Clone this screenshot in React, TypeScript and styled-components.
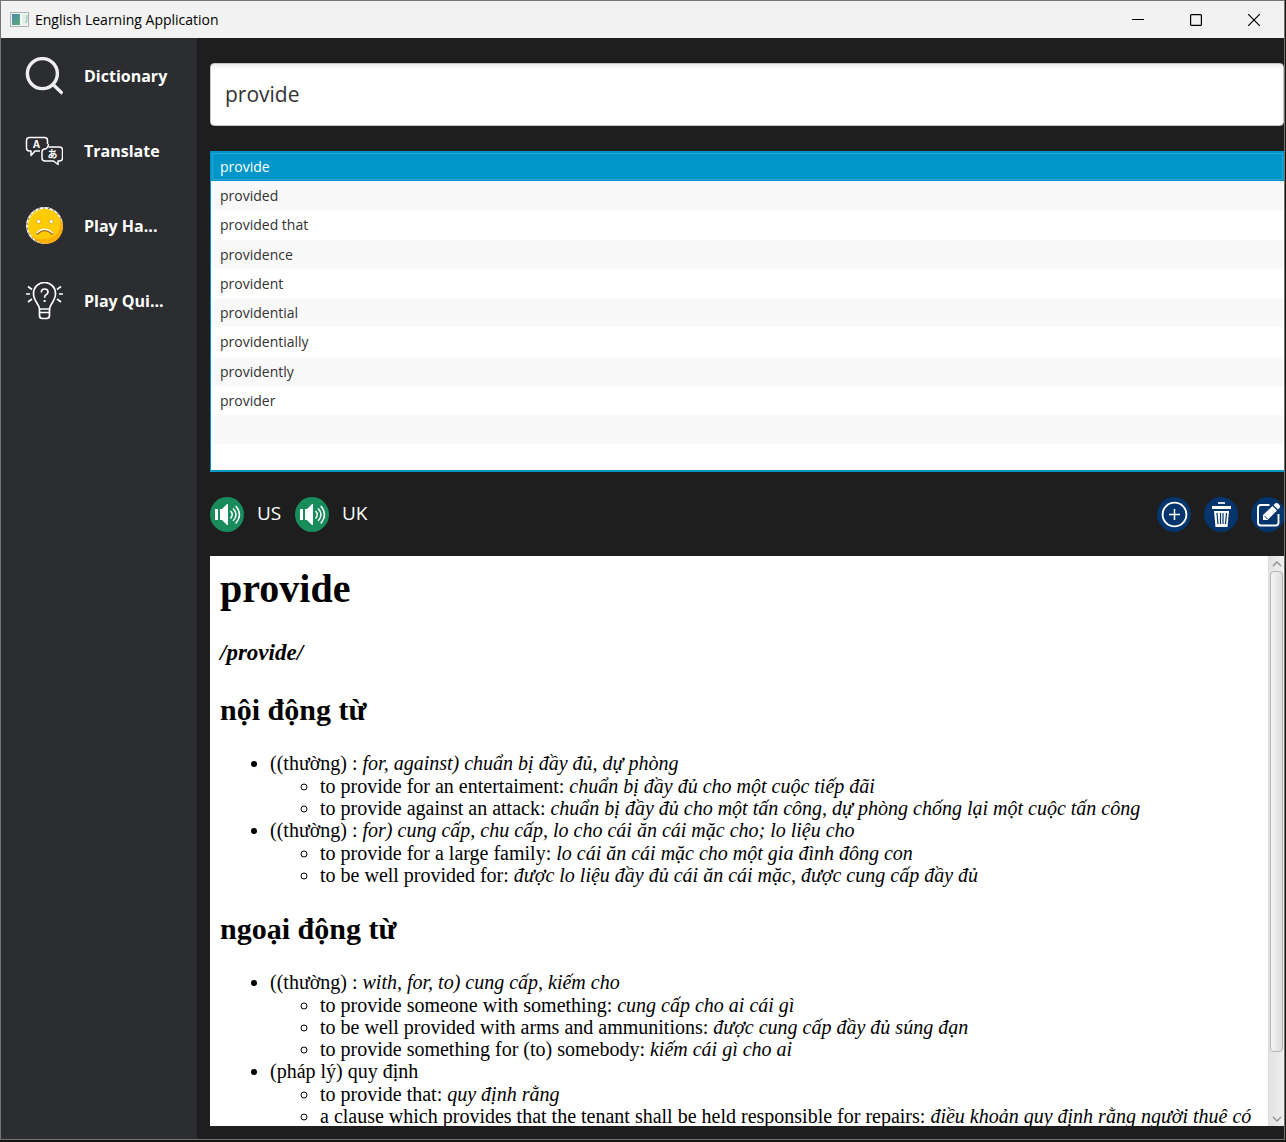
import React, { useState } from "react";
import styled, { createGlobalStyle } from "styled-components";

const ui = `"Open Sans", "Noto Sans", sans-serif`;

const GlobalStyle = createGlobalStyle`
  * { box-sizing: border-box; }
  body { margin: 0; background: #14150f; }
  button { border: 0; padding: 0; background: none; color: inherit; font: inherit; cursor: pointer; }
`;

const Desktop = styled.div`
  height: 100vh;
  padding: 0 1px 2px 0;
  font-family: ${ui};
`;

const AppWindow = styled.div`
  display: flex;
  flex-direction: column;
  height: 100%;
  border: 1px solid #747474;
  background: #1e1e1e;
  overflow: hidden;
`;

const TitleBar = styled.header`
  display: flex;
  flex: none;
  align-items: center;
  height: 37px;
  padding: 0 1px 0 9px;
  background: #f2f2f2;
`;

const WindowTitle = styled.h1`
  flex: 1;
  margin: 0 0 0 5px;
  font-size: 14px;
  font-weight: 400;
  line-height: 20px;
  color: #000;
`;

const WindowButton = styled.button`
  display: flex;
  align-items: center;
  justify-content: center;
  width: 58px;
  height: 37px;
`;

const Body = styled.div`
  display: flex;
  flex: 1;
  min-height: 0;
`;

const Sidebar = styled.nav`
  flex: none;
  width: 196px;
  background: #2b2d30;
`;

const NavButton = styled.button`
  display: flex;
  align-items: center;
  gap: 21px;
  width: 100%;
  height: 75px;
  padding-left: 24px;
  color: #fff;
  font-size: 16px;
  font-weight: 700;
  white-space: nowrap;
`;

const Main = styled.main`
  display: flex;
  flex: 1;
  flex-direction: column;
  gap: 25px;
  min-width: 0;
  padding: 25px 0 13px 13px;
  overflow: hidden;
`;

const SearchInput = styled.input`
  flex: none;
  width: 100%;
  height: 63px;
  padding: 0 14px 2px;
  border: 1px solid #c4c4c4;
  border-radius: 4px;
  outline: none;
  background: linear-gradient(#ededed, #fff 6px);
  color: #323232;
  font-family: ${ui};
  font-size: 21px;
`;

const WordList = styled.ul`
  display: grid;
  flex: none;
  grid-template-rows: repeat(3, 29px 29px 30px 29px);
  height: 321px;
  margin: 0;
  padding: 0;
  border: 2px solid #0096c9;
  border-width: 1px 0 2px 1px;
  background: #fff;
  list-style: none;
  overflow: hidden;
`;

const WordRow = styled.li`
  display: flex;
  min-height: 0;
  &:nth-child(even) { background: #f9f9f9; }
`;

const WordButton = styled.button<{ $selected: boolean }>`
  flex: 1;
  padding: 0 8px;
  border: 1px solid ${(p) => (p.$selected ? "#33a9d4" : "transparent")};
  outline: ${(p) => (p.$selected ? "1px solid #0096c9" : "none")};
  outline-offset: -1px;
  box-shadow: ${(p) => (p.$selected ? "inset 0 0 0 1px #2aa5d2" : "none")};
  background: ${(p) => (p.$selected ? "#0096c9" : "transparent")};
  color: ${(p) => (p.$selected ? "#fff" : "#323232")};
  font-size: 14px;
  line-height: 20px;
  text-align: left;
`;

const Tools = styled.div`
  display: flex;
  flex: none;
  align-items: center;
  gap: 13px;
  height: 35px;
  margin-right: -1px;
  color: #fff;
  font-size: 19px;
`;

const RoundButton = styled.button<{ $color: string }>`
  display: flex;
  flex: none;
  align-items: center;
  justify-content: center;
  width: 34px;
  height: 35px;
  border-radius: 50%;
  background: ${(p) => p.$color};
`;

const Accent = styled.span`
  width: 25px;
  padding-bottom: 4px;
  line-height: 24px;
`;

const Spacer = styled.div`
  flex: 1;
`;

const Viewer = styled.section`
  display: flex;
  flex: 1;
  min-height: 0;
  margin-top: -1px;
  background: #fff;
`;

const Article = styled.article`
  flex: 1;
  min-width: 0;
  padding: 10px 10px 0;
  color: #000;
  font-family: "Liberation Serif", "Times New Roman", serif;
  font-size: 20px;
  white-space: nowrap;
  overflow: hidden;
`;

const Headword = styled.h2`
  margin: 0 0 29px;
  font-size: 40px;
  line-height: 45px;
`;

const Pronunciation = styled.h3`
  margin: 0 0 27px;
  font-size: 23px;
  font-style: italic;
  line-height: 26px;
`;

const PartOfSpeech = styled.h3`
  margin: 0 0 25px;
  font-size: 30px;
  line-height: 34px;
`;

const Senses = styled.ul`
  margin: 0 0 26px;
  padding-left: 50px;
  line-height: 23px;
  list-style: disc;
`;

const Examples = styled.ul`
  margin: 0;
  padding-left: 50px;
  line-height: 22px;
  list-style: circle;
`;

const Scrollbar = styled.div`
  display: flex;
  flex: none;
  flex-direction: column;
  align-items: center;
  width: 16px;
  border-left: 1px solid #dcdcdc;
  background: linear-gradient(90deg, #e2e2e2, #efefef);
`;

const ScrollButton = styled.button`
  display: flex;
  align-items: center;
  justify-content: center;
  width: 15px;
  height: 15px;
`;

const Track = styled.div`
  display: flex;
  flex: 1;
  flex-direction: column;
  width: 13px;
`;

const Thumb = styled.div`
  flex: 0 0 89%;
  border: 1px solid #b4b4b4;
  border-radius: 4px;
  background: linear-gradient(90deg, #f6f6f6, #dcdcdc);
`;

const AppLogo = () => (
  <svg width="20" height="16" viewBox="0 0 20 16" aria-hidden="true">
    <defs>
      <linearGradient id="logo" x1="0" y1="0" x2="1" y2="1">
        <stop offset="0" stopColor="#4a86b4" />
        <stop offset="1" stopColor="#5cae6c" />
      </linearGradient>
    </defs>
    <rect x="0.5" y="0.5" width="18" height="14" fill="#f4f6f8" stroke="#a9b0b6" />
    <rect x="2" y="2" width="8" height="11" fill="url(#logo)" />
    <path d="M12 2h5v6l-1 5h-4z" fill="#e2efe9" />
    <path d="M17 3v5l-1 3" fill="none" stroke="#86bd9b" />
  </svg>
);

const SearchIcon = () => (
  <svg width="38" height="38" viewBox="0 0 38 38" fill="none" stroke="#efefef" strokeWidth="3.4" aria-hidden="true">
    <circle cx="17.4" cy="16.6" r="15" />
    <path d="M27.5 27L37.500 36.500" />
  </svg>
);

const TranslateIcon = () => (
  <svg width="38" height="38" viewBox="0 0 38 38" fill="none" stroke="#fff" strokeWidth="1.5" strokeLinejoin="round" aria-hidden="true">
    <path d="M22.500 12V8.500a3 3 0 0 0-3-3H4.500a3 3 0 0 0-3 3V16a3 3 0 0 0 3 3h1.500v4.500l4-4.500h5" />
    <path d="M23.500 15h11a3 3 0 0 1 3 3v8a3 3 0 0 1-3 3H33v3.500L28.500 29H20a3 3 0 0 1-3-3v-6c0-2 1-3 3-3 2 0 3-2 3.500-5" />
    <text x="11.500" y="16" fill="#fff" stroke="none" fontFamily="Open Sans, sans-serif" fontSize="10" fontWeight="700" textAnchor="middle">A</text>
    <text x="27.500" y="26" fill="#fff" stroke="none" fontFamily="Noto Sans CJK JP, sans-serif" fontSize="10" fontWeight="700" textAnchor="middle">あ</text>
  </svg>
);

const SadIcon = () => (
  <svg width="38" height="38" viewBox="0 0 38 38" aria-hidden="true">
    <circle cx="19.500" cy="18.500" r="18.400" fill="#fff" />
    <circle cx="19.500" cy="18.500" r="17.400" fill="none" stroke="#2b2d30" strokeWidth="0.800" strokeDasharray="2 3" />
    <circle cx="19.500" cy="18.500" r="16.800" fill="#ffcb05" />
    <path d="M4 23.500A16 16 0 0 1 22 2.700 17 17 0 0 0 4 23.500Z" fill="#ffe34d" />
    <path d="M7 29.500a16.500 16.500 0 0 0 28-19q2 18-12 21-9 2-16-2Z" fill="#fbae08" />
    <g fill="#fff" stroke="#c58d10" strokeWidth="0.600">
      <circle cx="13.500" cy="14.500" r="2" />
      <circle cx="26.200" cy="14.500" r="2" />
    </g>
    <path d="M11.500 27.200q8-8.500 16.500 0" fill="none" stroke="#9c6e12" strokeWidth="2.600" />
    <path d="M11.500 26.300q8-8 16.500 0" fill="none" stroke="#fff" strokeWidth="1.500" />
  </svg>
);

const QuizIcon = () => (
  <svg width="38" height="38" viewBox="0 0 38 38" fill="none" stroke="#fff" strokeWidth="1.700" aria-hidden="true">
    <path d="M14.500 27c0-5-6-7.500-6-15.500a11 11 0 0 1 22 0c0 8-6 10.500-6 15.500Z" />
    <path d="M14.500 27v6.500q0 3 3 3h4q3 0 3-3V27M14.500 30.500h10" />
    <path d="M1 12h4M34 12h4M3 4.500l4 3M36 4.500l-4 3M3 20L7 17M36 20L32 17" />
    <path d="M16.300 10.500q0-3.500 3.400-3.500 3.300 0 3.300 3 0 1.800-2 2.800-1.400.7-1.400 3" />
    <path d="M18.600 19h2" strokeWidth="2" />
  </svg>
);

const SpeakerIcon = () => (
  <svg width="34" height="35" viewBox="0 0 34 35" aria-hidden="true">
    <path d="M5 12h3v11H5zM10 12h2l5-5h1v21h-1l-5-5h-2z" fill="#fff" />
    <path d="M20.500 14q3.500 3.500 0 7.500M23 11.500q6 6 0 12.500M25.700 9q7.500 8.500 0 17.500" fill="none" stroke="#fff" strokeWidth="1.500" />
  </svg>
);

const AddIcon = () => (
  <svg width="34" height="35" viewBox="0 0 34 35" fill="none" stroke="#fff" aria-hidden="true">
    <circle cx="17.500" cy="17.500" r="11.900" strokeWidth="1.900" />
    <path d="M17.500 12v11M12 17.500h11" strokeWidth="1.500" />
  </svg>
);

const TrashIcon = () => (
  <svg width="34" height="35" viewBox="0 0 34 35" aria-hidden="true">
    <path d="M14 5h7v2h-7z" fill="#d4dcea" />
    <path d="M8 9h19v3H8zM10 14h15l-1.500 16h-12z" fill="#fff" />
    <path d="M13 16l1 11M16.500 16v11M19 16v11M22.500 16l-1 11" stroke="#04356c" strokeWidth="1.200" />
  </svg>
);

const EditIcon = () => (
  <svg width="34" height="35" viewBox="0 0 34 35" aria-hidden="true">
    <path d="M18.500 8H10q-3 0-3 3v14.500q0 3 3 3h14.500q3 0 3-3V17" fill="none" stroke="#fff" strokeWidth="1.900" />
    <path d="M12 23v-5L21.500 9l4.500 4.500-9.500 9.500zM22.500 8l1.500-1.500q1.500-1 3 0l1.500 1.500q1 1.500 0 3L27 12.500z" fill="#fff" />
    <path d="M13.500 19l3 3" stroke="#04356c" />
  </svg>
);

const Chevron = ({ up }: { up?: boolean }) => (
  <svg width="10" height="6" viewBox="0 0 10 6" fill="none" stroke="#8f8f8f" strokeWidth="1.300" aria-hidden="true">
    <path d={up ? "M1 5l4-4 4 4" : "M1 1l4 4 4-4"} />
  </svg>
);

const nav = [
  { label: "Dictionary", Icon: SearchIcon },
  { label: "Translate", Icon: TranslateIcon },
  { label: "Play Ha...", Icon: SadIcon },
  { label: "Play Qui...", Icon: QuizIcon },
];

const words = [
  "provide", "provided", "provided that", "providence", "provident",
  "providential", "providentially", "providently", "provider",
];

type Phrase = { text: string; meaning?: string };
type Sense = Phrase & { examples: Phrase[] };

const entry: { part: string; senses: Sense[] }[] = [
  {
    part: "nội động từ",
    senses: [
      {
        text: "((thường) :", meaning: "for, against) chuẩn bị đầy đủ, dự phòng",
        examples: [
          { text: "to provide for an entertaiment:", meaning: "chuẩn bị đầy đủ cho một cuộc tiếp đãi" },
          { text: "to provide against an attack:", meaning: "chuẩn bị đầy đủ cho một tấn công, dự phòng chống lại một cuộc tấn công" },
        ],
      },
      {
        text: "((thường) :", meaning: "for) cung cấp, chu cấp, lo cho cái ăn cái mặc cho; lo liệu cho",
        examples: [
          { text: "to provide for a large family:", meaning: "lo cái ăn cái mặc cho một gia đình đông con" },
          { text: "to be well provided for:", meaning: "được lo liệu đầy đủ cái ăn cái mặc, được cung cấp đầy đủ" },
        ],
      },
    ],
  },
  {
    part: "ngoại động từ",
    senses: [
      {
        text: "((thường) :", meaning: "with, for, to) cung cấp, kiếm cho",
        examples: [
          { text: "to provide someone with something:", meaning: "cung cấp cho ai cái gì" },
          { text: "to be well provided with arms and ammunitions:", meaning: "được cung cấp đầy đủ súng đạn" },
          { text: "to provide something for (to) somebody:", meaning: "kiếm cái gì cho ai" },
        ],
      },
      {
        text: "(pháp lý) quy định",
        examples: [
          { text: "to provide that:", meaning: "quy định rằng" },
          { text: "a clause which provides that the tenant shall be held responsible for repairs:", meaning: "điều khoản quy định rằng người thuê có" },
        ],
      },
    ],
  },
];

const PhraseText = ({ text, meaning }: Phrase) => (
  <>
    {text}
    {meaning && <> <i>{meaning}</i></>}
  </>
);

export default function App() {
  const [query, setQuery] = useState("provide");
  const [selected, setSelected] = useState("provide");

  return (
    <>
      <GlobalStyle />
      <Desktop>
        <AppWindow>
          <TitleBar>
            <AppLogo />
            <WindowTitle>English Learning Application</WindowTitle>
            <WindowButton aria-label="Minimize">
              <svg width="12" height="12" stroke="#000" aria-hidden="true"><path d="M0 5.500h12" /></svg>
            </WindowButton>
            <WindowButton aria-label="Maximize">
              <svg width="12" height="12" fill="none" stroke="#000" strokeWidth="1.200" aria-hidden="true"><rect x="0.600" y="0.600" width="10.800" height="10.800" rx="1" /></svg>
            </WindowButton>
            <WindowButton aria-label="Close">
              <svg width="12" height="12" stroke="#000" strokeWidth="1.200" aria-hidden="true"><path d="M0 0l12 12M12 0L0 12" /></svg>
            </WindowButton>
          </TitleBar>
          <Body>
            <Sidebar>
              {nav.map(({ label, Icon }) => (
                <NavButton key={label}><Icon />{label}</NavButton>
              ))}
            </Sidebar>
            <Main>
              <SearchInput aria-label="Search word" value={query} onChange={(e) => setQuery(e.target.value)} />
              <WordList>
                {words.map((word) => (
                  <WordRow key={word}>
                    <WordButton $selected={word === selected} onClick={() => setSelected(word)}>{word}</WordButton>
                  </WordRow>
                ))}
                <WordRow />
                <WordRow />
              </WordList>
              <Tools>
                <RoundButton $color="#198c5c" aria-label="Play US pronunciation"><SpeakerIcon /></RoundButton>
                <Accent>US</Accent>
                <RoundButton $color="#198c5c" aria-label="Play UK pronunciation"><SpeakerIcon /></RoundButton>
                <Accent>UK</Accent>
                <Spacer />
                <RoundButton $color="#04356c" aria-label="Add word"><AddIcon /></RoundButton>
                <RoundButton $color="#04356c" aria-label="Delete word"><TrashIcon /></RoundButton>
                <RoundButton $color="#04356c" aria-label="Edit word"><EditIcon /></RoundButton>
              </Tools>
              <Viewer>
                <Article>
                  <Headword>provide</Headword>
                  <Pronunciation>/provide/</Pronunciation>
                  {entry.map(({ part, senses }) => (
                    <React.Fragment key={part}>
                      <PartOfSpeech>{part}</PartOfSpeech>
                      <Senses>
                        {senses.map((sense, i) => (
                          <li key={i}>
                            <PhraseText text={sense.text} meaning={sense.meaning} />
                            <Examples>
                              {sense.examples.map((example) => (
                                <li key={example.text}><PhraseText {...example} /></li>
                              ))}
                            </Examples>
                          </li>
                        ))}
                      </Senses>
                    </React.Fragment>
                  ))}
                </Article>
                <Scrollbar>
                  <ScrollButton aria-label="Scroll up"><Chevron up /></ScrollButton>
                  <Track><Thumb /></Track>
                  <ScrollButton aria-label="Scroll down"><Chevron /></ScrollButton>
                </Scrollbar>
              </Viewer>
            </Main>
          </Body>
        </AppWindow>
      </Desktop>
    </>
  );
}
